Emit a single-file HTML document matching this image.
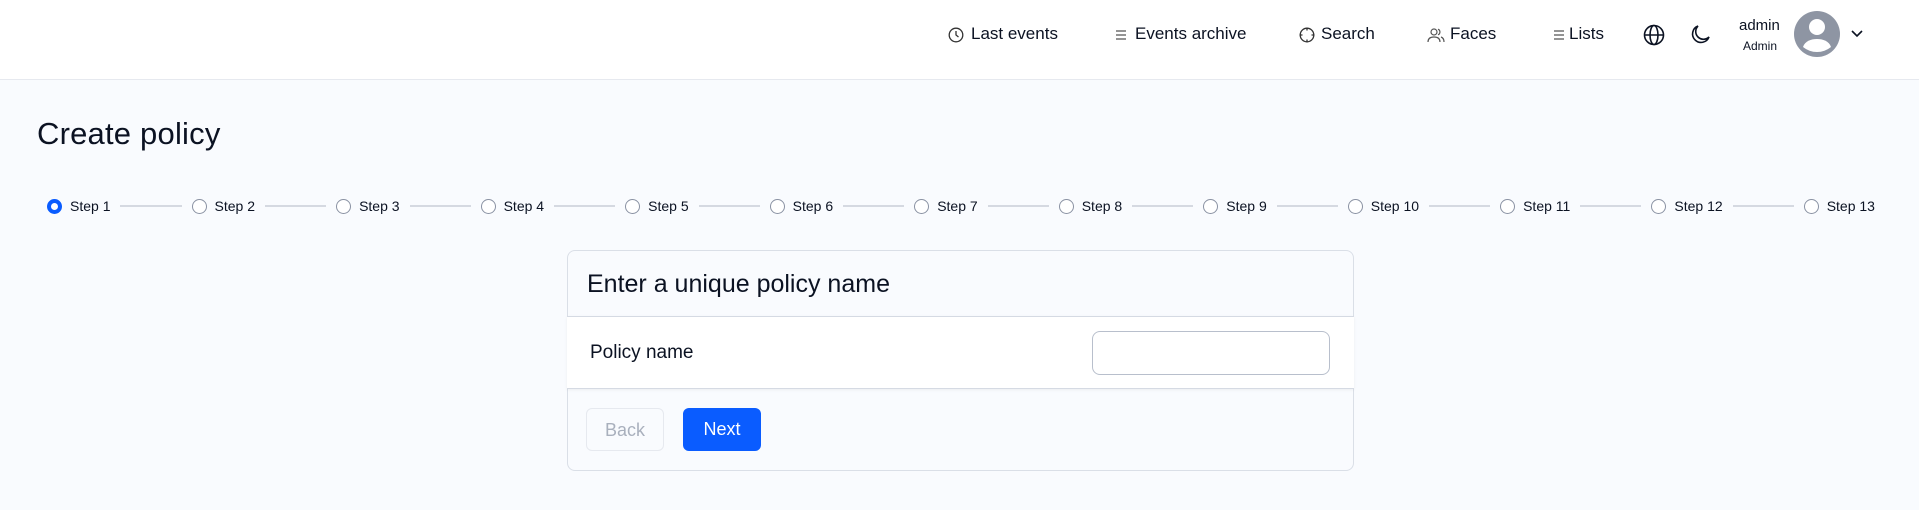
<!DOCTYPE html>
<html><head><meta charset="utf-8"><style>
*{box-sizing:border-box;margin:0;padding:0}
body{width:1919px;height:510px;overflow:hidden;background:#f9fbfe;font-family:"Liberation Sans",sans-serif;color:#0b1222;position:relative}
.hdr{position:absolute;left:0;top:0;width:1919px;height:80px;background:#fff;border-bottom:1px solid #e6e9ef}
.n{position:absolute;top:24px;font-size:17px;line-height:20px;white-space:nowrap}
svg{position:absolute}
h1{position:absolute;left:37px;top:116px;font-size:31px;font-weight:normal;letter-spacing:0.2px}
.steps{position:absolute;left:47px;top:196px;width:1828px;height:20px;display:flex;align-items:center}
.st{display:flex;align-items:center;font-size:14px;white-space:nowrap}
.rd{width:15px;height:15px;border:1px solid #8a92a3;border-radius:50%;margin-right:8px;background:#fff}
.rd.on{border:4px solid #0a5cff}
.ln{flex:1;height:2px;background:#d5d9e1;margin:0 10px}
.card{position:absolute;left:567px;top:250px;width:787px;height:221px;border:1px solid #dadfe7;border-radius:8px;background:#f9fbfe}
.ch{position:absolute;left:19px;top:19px;font-size:25px}
.cb{position:absolute;left:-1px;top:65px;width:787px;height:73px;background:#fff;border-top:1px solid #d5dae3;border-bottom:1px solid #d5dae3;box-shadow:0 1px 3px rgba(0,0,0,.06)}
.lb{position:absolute;left:23px;top:25px;font-size:19px}
.in{position:absolute;left:525px;top:14px;width:238px;height:44px;border:1px solid #b8bfcc;border-radius:8px;background:#fff}
.b{position:absolute;top:157px;height:43px;border-radius:6px;font-size:18px;text-align:center;line-height:43px}
</style></head><body>
<div class="hdr">
<svg style="left:948px;top:27px" width="16" height="16" viewBox="0 0 16 16" fill="none" stroke="#333" stroke-width="1.3"><circle cx="8" cy="8" r="6.8"/><path d="M8 4v4l2.5 2"/></svg>
<div class="n" style="left:971px">Last events</div>
<svg style="left:1115px;top:28px" width="12" height="14" viewBox="0 0 12 14" stroke="#555" stroke-width="1.2"><path d="M1 3h10M1 7h10M1 11h10"/></svg>
<div class="n" style="left:1135px">Events archive</div>
<svg style="left:1299px;top:27px" width="16" height="16" viewBox="0 0 16 16" fill="none" stroke="#333" stroke-width="1.3"><circle cx="8" cy="8" r="6.8"/><path d="M8 0.5v3M8 12.5v3M0.5 8h3M12.5 8h3"/></svg>
<div class="n" style="left:1321px">Search</div>
<svg style="left:1427px;top:27px" width="18" height="16" viewBox="0 0 18 16" fill="none" stroke="#555" stroke-width="1.2"><circle cx="7" cy="5" r="3"/><path d="M1 15c0-4 3-5 6-5s6 1 6 5"/><path d="M11 2.2a3 3 0 0 1 0 5.6M14 10c2 .7 3 2 3 5"/></svg>
<div class="n" style="left:1450px">Faces</div>
<svg style="left:1553px;top:28px" width="12" height="14" viewBox="0 0 12 14" stroke="#555" stroke-width="1.2"><path d="M1 3h10M1 7h10M1 11h10"/></svg>
<div class="n" style="left:1569px">Lists</div>
<svg style="left:1643px;top:24px" width="22" height="22" viewBox="0 0 22 22" fill="none" stroke="#0b1222" stroke-width="1.6"><circle cx="11" cy="11" r="9.5"/><ellipse cx="11" cy="11" rx="4" ry="9.5"/><path d="M1.5 11h19"/></svg>
<svg style="left:1689px;top:24px" width="22" height="22" viewBox="0 0 22 22" fill="none" stroke="#0b1222" stroke-width="1.6"><path d="M9 2a8.5 8.5 0 1 0 11 11A7 7 0 0 1 9 2z"/></svg>
<div class="n" style="left:1739px;top:16px;font-size:15px">admin</div>
<div class="n" style="left:1743px;top:36px;font-size:12px">Admin</div>
<svg style="left:1794px;top:11px" width="46" height="46" viewBox="0 0 46 46"><circle cx="23" cy="23" r="23" fill="#8e95a3"/><circle cx="23" cy="16" r="8" fill="#fff"/><path d="M9 36c2-6 8-8 14-8s12 2 14 8a22 22 0 0 1-28 0z" fill="#fff"/></svg>
<svg style="left:1850px;top:29px" width="14" height="10" viewBox="0 0 14 10" fill="none" stroke="#0b1222" stroke-width="1.6"><path d="M2 2l5 5 5-5"/></svg>
</div>
<h1>Create policy</h1>
<div class="steps">
<div class="st"><span class="rd on"></span>Step 1</div><div class="ln"></div>
<div class="st"><span class="rd"></span>Step 2</div><div class="ln"></div>
<div class="st"><span class="rd"></span>Step 3</div><div class="ln"></div>
<div class="st"><span class="rd"></span>Step 4</div><div class="ln"></div>
<div class="st"><span class="rd"></span>Step 5</div><div class="ln"></div>
<div class="st"><span class="rd"></span>Step 6</div><div class="ln"></div>
<div class="st"><span class="rd"></span>Step 7</div><div class="ln"></div>
<div class="st"><span class="rd"></span>Step 8</div><div class="ln"></div>
<div class="st"><span class="rd"></span>Step 9</div><div class="ln"></div>
<div class="st"><span class="rd"></span>Step 10</div><div class="ln"></div>
<div class="st"><span class="rd"></span>Step 11</div><div class="ln"></div>
<div class="st"><span class="rd"></span>Step 12</div><div class="ln"></div>
<div class="st"><span class="rd"></span>Step 13</div>
</div>
<div class="card">
<div class="ch">Enter a unique policy name</div>
<div class="cb"><div class="lb">Policy name</div><div class="in"></div></div>
<div class="b" style="left:18px;width:78px;border:1px solid #e6e9ef;color:#a9b0bd">Back</div>
<div class="b" style="left:115px;width:78px;background:#0a5cff;color:#fff">Next</div>
</div>
</body></html>
